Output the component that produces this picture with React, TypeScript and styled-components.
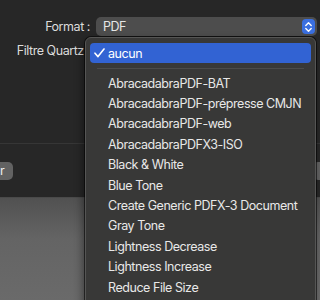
import React from "react";
import styled, { createGlobalStyle } from "styled-components";

const GlobalStyle = createGlobalStyle`
  html, body {
    margin: 0;
    padding: 0;
    background: #272727;
  }
  body {
    font-family: Inter, "Liberation Sans", sans-serif;
    letter-spacing: -0.45px;
    -webkit-font-smoothing: antialiased;
  }
`;

const Screen = styled("div")`
  position: relative;
  width: 320px;
  height: 300px;
  overflow: hidden;
  background: #272727;
`;

const Top = styled("div")`
  height: 144px;
  box-sizing: border-box;
  padding-top: 17px;
  border-bottom: 1px solid #363636;
  display: flex;
  flex-direction: column;
  gap: 5px;
`;

const Row = styled("div")`
  display: flex;
  align-items: center;
  height: 19px;
  gap: 6px;
`;

const Label = styled("div")`
  width: 90px;
  text-align: right;
  font-size: 12.5px;
  color: #dcdcdc;
  white-space: nowrap;
`;

const Popup = styled("div")`
  flex: 1;
  height: 19px;
  margin-right: 3px;
  border-radius: 5px;
  background: #4d4d4d;
  display: flex;
  align-items: center;
  justify-content: space-between;
  padding: 0 2px 0 7px;
  font-size: 12.5px;
  color: #e6e6e6;
`;

const Stepper = styled("div")`
  width: 13px;
  height: 15px;
  border-radius: 4px;
  background: #3a6fe0;
  display: flex;
  align-items: center;
  justify-content: center;
`;

const ButtonRow = styled("div")`
  height: 53px;
  display: flex;
  align-items: center;
  justify-content: space-between;
`;

const Button = styled("div")<{ $side: "left" | "right" }>`
  height: 18px;
  display: flex;
  align-items: center;
  background: #626262;
  color: #f0f0f0;
  font-size: 12.5px;
  border-radius: ${(p) => (p.$side === "left" ? "0 5px 5px 0" : "5px 0 0 5px")};
  padding: ${(p) => (p.$side === "left" ? "0 9px 0 0" : "0 0 0 4px")};
`;

const Preview = styled("div")`
  height: 102px;
  border-top: 1px solid #4a4a4a;
  background: linear-gradient(180deg, #515151 0%, #646464 40%, #6a6a6a 100%);
`;

const Menu = styled("div")`
  position: absolute;
  top: 37px;
  left: 85px;
  width: 231px;
  height: 280px;
  box-sizing: border-box;
  padding: 5px 4px;
  background: #383837;
  border: 1px solid #555554;
  border-radius: 6px;
  box-shadow: 0 0 0 1px rgba(0, 0, 0, 0.55), -2px 4px 10px rgba(0, 0, 0, 0.45);
  font-size: 12.5px;
  color: #e8e8e8;
`;

const Item = styled("div")<{ $selected?: boolean }>`
  position: relative;
  height: ${(p) => (p.$selected ? "20px" : "20.4px")};
  display: flex;
  align-items: center;
  padding-left: 18px;
  border-radius: 4px;
  white-space: nowrap;
  background: ${(p) => (p.$selected ? "#3263d3" : "transparent")};
  color: ${(p) => (p.$selected ? "#ffffff" : "#e8e8e8")};
`;

const Check = styled("span")`
  position: absolute;
  left: 4px;
  top: 50%;
  transform: translateY(-50%);
  display: flex;
`;

const Separator = styled("div")`
  height: 1px;
  margin: 5px 7px 4px;
  background: #4b4b4a;
`;

const filters = [
  "AbracadabraPDF-BAT",
  "AbracadabraPDF-prépresse CMJN",
  "AbracadabraPDF-web",
  "AbracadabraPDFX3-ISO",
  "Black & White",
  "Blue Tone",
  "Create Generic PDFX-3 Document",
  "Gray Tone",
  "Lightness Decrease",
  "Lightness Increase",
  "Reduce File Size",
];

const App = () => (
  <Screen>
    <GlobalStyle />
    <Top>
      <Row>
        <Label>Format :</Label>
        <Popup>
          PDF
          <Stepper>
            <svg width="9" height="12" viewBox="0 0 9 12" fill="none">
              <path
                d="M1.8 4.4 L4.5 1.8 L7.2 4.4 M1.8 7.6 L4.5 10.2 L7.2 7.6"
                stroke="#ffffff"
                strokeWidth="1.4"
                strokeLinecap="round"
                strokeLinejoin="round"
              />
            </svg>
          </Stepper>
        </Popup>
      </Row>
      <Row>
        <Label>Filtre Quartz :</Label>
      </Row>
    </Top>
    <ButtonRow>
      <Button $side="left">r</Button>
      <Button $side="right">&nbsp;</Button>
    </ButtonRow>
    <Preview />

    <Menu>
      <Item $selected>
        <Check>
          <svg width="11" height="10" viewBox="0 0 11 10" fill="none">
            <path
              d="M1 5.2 L4 8.6 L10 1"
              stroke="#ffffff"
              strokeWidth="1.6"
              strokeLinecap="round"
              strokeLinejoin="round"
            />
          </svg>
        </Check>
        aucun
      </Item>
      <Separator />
      {filters.map((name) => (
        <Item key={name}>{name}</Item>
      ))}
    </Menu>
  </Screen>
);

export default App;
